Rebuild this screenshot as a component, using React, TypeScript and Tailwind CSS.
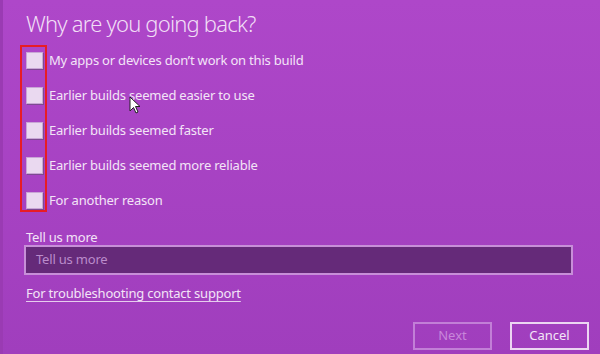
import React from "react";

const reasons = [
  "My apps or devices don\u2019t work on this build",
  "Earlier builds seemed easier to use",
  "Earlier builds seemed faster",
  "Earlier builds seemed more reliable",
  "For another reason",
];

const Cursor = () => (
  <svg width="12" height="18" viewBox="0 0 12 18" className="absolute left-[126px] top-[96px]">
    <path d="M1 1 L1 15 L4.5 11.5 L7 17 L9 16 L6.5 10.5 L11 10.5 Z" fill="#fff" stroke="#222" strokeWidth="1" strokeLinejoin="round" />
  </svg>
);

export default function App() {
  return (
    <div
      className="relative w-[600px] h-[354px] overflow-hidden border-l-[3px] border-[#9a3bb3] bg-gradient-to-b from-[#ae47c9] to-[#a03ebd] text-[#f3e4f7]"
      style={{ fontFamily: '"Noto Sans", "Open Sans", sans-serif' }}
    >
      <div className="flex flex-col pl-[23px] pr-[11px] h-full">
        <h1 className="mt-[7px] h-[32px] text-[22px] leading-[32px] font-light tracking-[-0.8px] text-[#f1def6]">Why are you going back?</h1>

        <div className="mt-[4px] flex flex-col">
          {reasons.map((r) => (
            <label key={r} className="flex items-center h-[35px] gap-[6px]">
              <span className="w-[17px] h-[17px] bg-[#ead9f0] border border-[#c9a6d6] shadow-[1px_1px_0_#7d4a92]" />
              <span className="text-[13px] tracking-[-0.2px]">{r}</span>
            </label>
          ))}
        </div>

        <div className="mt-[11px] text-[13px] leading-[17px] h-[17px] tracking-[-0.2px]">Tell us more</div>
        <div className="-ml-[2px] -mt-[1px] w-[549px] h-[30px] border-2 border-[#c78fd8] bg-[#652a79] flex items-center pl-[10px]">
          <span className="text-[13px] tracking-[-0.2px] text-[#bb8ccb]">Tell us more</span>
        </div>

        <a href="#" className="mt-[8px] self-start text-[13px] leading-[20px] tracking-[-0.2px] underline underline-offset-[3px] decoration-[#e6cdee] text-[#f3e4f7]">
          For troubleshooting contact support
        </a>

        <div className="mt-auto mb-[4px] flex justify-end gap-[18px]">
          <button className="w-[79px] h-[28px] border-2 border-[#c27fd7] text-[13px] text-[#c886da]">Next</button>
          <button className="w-[79px] h-[28px] border-2 border-[#ecd6f2] text-[13px] text-[#f3e4f7]">Cancel</button>
        </div>
      </div>

      <div className="absolute left-[17px] top-[45px] w-[27px] h-[167px] border-2 border-[#e81c24]" />
      <Cursor />
    </div>
  );
}
